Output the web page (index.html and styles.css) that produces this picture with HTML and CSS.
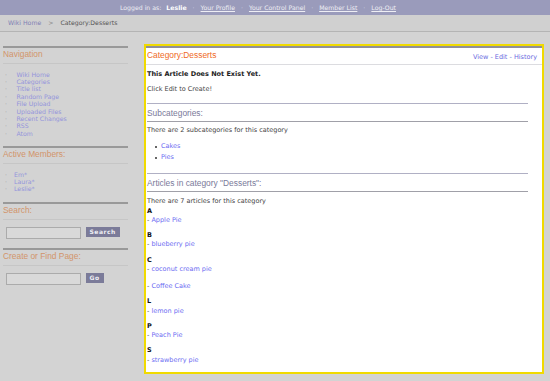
FILE: index.html
```
<!DOCTYPE html>
<html>
<head>
<meta charset="utf-8">
<link rel="stylesheet" href="styles.css">
</head>
<body>
<div class="topbar">
  <span>Logged in as: <b>Leslie</b></span>
  <span class="dot">·</span>
  <a href="#">Your Profile</a>
  <span class="dot">·</span>
  <a href="#">Your Control Panel</a>
  <span class="dot">·</span>
  <a href="#">Member List</a>
  <span class="dot">·</span>
  <a href="#">Log-Out</a>
</div>
<div class="crumbs">
  <a href="#">Wiki Home</a><span class="gt">&gt;</span><span class="here">Category:Desserts</span>
</div>
<div class="layout">
  <div class="sidebar">
    <div class="sbox">
      <div class="shead">Navigation</div>
      <ul class="slist nav">
        <li><a href="#">Wiki Home</a></li>
        <li><a href="#">Categories</a></li>
        <li><a href="#">Title list</a></li>
        <li><a href="#">Random Page</a></li>
        <li><a href="#">File Upload</a></li>
        <li><a href="#">Uploaded Files</a></li>
        <li><a href="#">Recent Changes</a></li>
        <li><a href="#">RSS</a></li>
        <li><a href="#">Atom</a></li>
      </ul>
    </div>
    <div class="sbox">
      <div class="shead">Active Members:</div>
      <ul class="slist members">
        <li><a href="#">Em*</a></li>
        <li><a href="#">Laura*</a></li>
        <li><a href="#">Leslie*</a></li>
      </ul>
    </div>
    <div class="sbox">
      <div class="shead">Search:</div>
      <div class="sform">
        <input class="field" type="text">
        <button class="btn">Search</button>
      </div>
    </div>
    <div class="sbox">
      <div class="shead">Create or Find Page:</div>
      <div class="sform">
        <input class="field" type="text">
        <button class="btn">Go</button>
      </div>
    </div>
  </div>
  <div class="main">
    <div class="mhead">
      <div class="title">Category:Desserts</div>
      <div class="actions"><a href="#">View</a> - <a href="#">Edit</a> - <a href="#">History</a></div>
    </div>
    <div class="content">
      <p class="strong">This Article Does Not Exist Yet.</p>
      <p class="txt">Click Edit to Create!</p>
      <div class="sect">Subcategories:</div>
      <p class="count">There are 2 subcategories for this category</p>
      <ul class="subcats">
        <li><a href="#">Cakes</a></li>
        <li><a href="#">Pies</a></li>
      </ul>
      <div class="sect">Articles in category "Desserts":</div>
      <p class="count">There are 7 articles for this category</p>
      <div class="letter">A</div>
      <div class="art">- <a href="#">Apple Pie</a></div>
      <div class="letter">B</div>
      <div class="art">- <a href="#">blueberry pie</a></div>
      <div class="letter">C</div>
      <div class="art">- <a href="#">coconut cream pie</a></div>
      <div class="art">- <a href="#">Coffee Cake</a></div>
      <div class="letter">L</div>
      <div class="art">- <a href="#">lemon pie</a></div>
      <div class="letter">P</div>
      <div class="art">- <a href="#">Peach Pie</a></div>
      <div class="letter">S</div>
      <div class="art">- <a href="#">strawberry pie</a></div>
    </div>
  </div>
</div>
</body>
</html>
```
FILE: styles.css
```
html, body {
  margin: 0;
  padding: 0;
}
body {
  background: #d3d3d3;
  font-family: "DejaVu Sans", Verdana, sans-serif;
  color: #333;
  width: 550px;
  height: 381px;
  overflow: hidden;
}
a {
  text-decoration: none;
}
.topbar {
  height: 15px;
  background: #9a9bbb;
  color: #eeeef4;
  font-size: 6.2px;
  line-height: 15px;
  display: flex;
  justify-content: center;
  gap: 6px;
  padding-right: 34px;
}
.topbar b {
  margin-left: 3px;
  color: #fff;
}
.topbar a {
  color: #eeeef4;
  text-decoration: underline;
}
.topbar .dot {
  color: #d8d8e6;
}
.crumbs {
  height: 16px;
  line-height: 16px;
  border-bottom: 1px solid #b4b4b4;
  background: #d0d0d0;
  padding-left: 8px;
  font-size: 6.2px;
}
.crumbs a {
  color: #8080b4;
}
.crumbs .gt {
  color: #888;
  margin: 0 7px;
}
.crumbs .here {
  color: #555;
}
.layout {
  display: flex;
  align-items: flex-start;
  padding-top: 12px;
}
.sidebar {
  width: 125px;
  margin-left: 3px;
  margin-top: 2px;
}
.sbox {
  border-top: 2px solid #999;
}
.shead {
  font-family: "Liberation Sans", Arial, sans-serif;
  font-size: 8.4px;
  line-height: 13px;
  padding-bottom: 2px;
  color: #d2936a;
  border-bottom: 1px solid #c6c6c6;
}
.slist {
  list-style: none;
  margin: 0;
  padding: 6.5px 0 9px 0;
  font-size: 6.2px;
  line-height: 7.4px;
}
.slist li {
  display: flex;
}
.slist li::before {
  content: "·";
  color: #999;
  width: 13.5px;
  padding-left: 2px;
  box-sizing: border-box;
}
.slist.members li::before {
  width: 11px;
}
.slist a {
  color: #9393dc;
}
.sform {
  display: flex;
  align-items: flex-start;
  gap: 5px;
  padding: 7px 0 9px 2.5px;
}
.field {
  width: 75px;
  height: 12px;
  box-sizing: border-box;
  border: 1px solid #ababab;
  background: #d9d9d9;
  margin: 0;
  padding: 0;
}
.btn {
  height: 10px;
  box-sizing: border-box;
  border: none;
  margin: 0;
  background: #7b7b99;
  color: #eeeef4;
  font-family: "DejaVu Sans", Verdana, sans-serif;
  font-weight: bold;
  font-size: 6px;
  letter-spacing: 0.5px;
  line-height: 10px;
  padding: 0 4px;
}
.main {
  margin-left: 16px;
  width: 396px;
  border: 2px solid #f0da00;
  background: #fff;
}
.mhead {
  border-top: 2px solid #8f8f9a;
  border-bottom: 1px solid #dcdce0;
  display: flex;
  justify-content: space-between;
  align-items: flex-end;
  padding: 0 5px 2px 1px;
  height: 14px;
}
.title {
  font-family: "Liberation Sans", Arial, sans-serif;
  font-size: 8.4px;
  line-height: 14px;
  color: #ef6a26;
}
.actions {
  font-size: 6.5px;
  line-height: 9px;
  color: #6a6ae0;
  padding-bottom: 0.5px;
}
.actions a {
  color: #6a6ae0;
}
.content {
  padding: 4.5px 14px 0 1px;
  font-size: 6.5px;
}
.content p {
  margin: 0;
  line-height: 9.5px;
}
.content .strong {
  font-weight: bold;
  color: #222;
  margin-bottom: 5.5px;
}
.content .txt {
  color: #444;
  margin-bottom: 9.3px;
}
.sect {
  font-family: "Liberation Sans", Arial, sans-serif;
  font-size: 8.4px;
  line-height: 14px;
  color: #7a7a9a;
  border-top: 1px solid #b0b0c4;
  border-bottom: 1px solid #a0a0a8;
  padding: 1.4px 0 1.5px 0;
}
.content .count {
  color: #444;
  margin-top: 4.3px;
  margin-bottom: 1.5px;
}
.subcats {
  list-style: none;
  margin: 5.5px 0 10px 0;
  padding: 0;
}
.subcats li {
  display: flex;
  align-items: center;
  line-height: 11px;
  padding-left: 8px;
}
.subcats li::before {
  content: "";
  width: 2px;
  height: 2px;
  border-radius: 50%;
  background: #333;
  margin-right: 4px;
}
.subcats a,
.art a {
  color: #6c6cf2;
}
.letter {
  font-weight: bold;
  color: #111;
  line-height: 7.2px;
}
.art {
  line-height: 11.8px;
  margin-bottom: 5.5px;
  color: #444;
}
```
